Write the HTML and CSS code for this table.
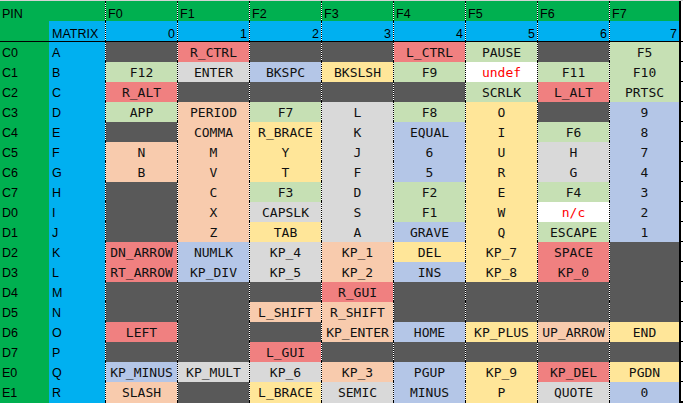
FILE: index.html
```html
<html>
<head>
<meta charset="utf-8">
<title>Keyboard matrix</title>
<link rel="stylesheet" href="styles.css">
</head>

<body>

<div class="sheet">

<div class="row head-top">
<div class="pin">PIN</div><div class="mtx"></div>
<div class="f">F0</div><div class="f">F1</div><div class="f">F2</div><div class="f">F3</div>
<div class="f">F4</div><div class="f">F5</div><div class="f">F6</div><div class="f last">F7</div>
</div>

<div class="row head-num">
<div class="pin"></div><div class="mtx">MATRIX</div>
<div class="f">0</div><div class="f">1</div><div class="f">2</div><div class="f">3</div>
<div class="f">4</div><div class="f">5</div><div class="f">6</div><div class="f last">7</div>
</div>

<div class="row data">
<div class="pin">C0</div><div class="mtx">A</div>
<div class="f dark"></div><div class="f red">R_CTRL</div><div class="f dark"></div><div class="f dark"></div>
<div class="f red">L_CTRL</div><div class="f grn">PAUSE</div><div class="f dark"></div><div class="f last grn">F5</div>
</div>

<div class="row data">
<div class="pin">C1</div><div class="mtx">B</div>
<div class="f grn">F12</div><div class="f gry">ENTER</div><div class="f blu">BKSPC</div><div class="f yel">BKSLSH</div>
<div class="f grn">F9</div><div class="f none">undef</div><div class="f grn">F11</div><div class="f last grn">F10</div>
</div>

<div class="row data">
<div class="pin">C2</div><div class="mtx">C</div>
<div class="f red">R_ALT</div><div class="f dark"></div><div class="f dark"></div><div class="f dark"></div>
<div class="f dark"></div><div class="f grn">SCRLK</div><div class="f red">L_ALT</div><div class="f last grn">PRTSC</div>
</div>

<div class="row data">
<div class="pin">C3</div><div class="mtx">D</div>
<div class="f grn">APP</div><div class="f pch">PERIOD</div><div class="f grn">F7</div><div class="f gry">L</div>
<div class="f grn">F8</div><div class="f yel">O</div><div class="f dark"></div><div class="f last blu">9</div>
</div>

<div class="row data">
<div class="pin">C4</div><div class="mtx">E</div>
<div class="f dark"></div><div class="f pch">COMMA</div><div class="f yel">R_BRACE</div><div class="f gry">K</div>
<div class="f blu">EQUAL</div><div class="f yel">I</div><div class="f grn">F6</div><div class="f last blu">8</div>
</div>

<div class="row data">
<div class="pin">C5</div><div class="mtx">F</div>
<div class="f pch">N</div><div class="f pch">M</div><div class="f yel">Y</div><div class="f gry">J</div>
<div class="f blu">6</div><div class="f yel">U</div><div class="f gry">H</div><div class="f last blu">7</div>
</div>

<div class="row data">
<div class="pin">C6</div><div class="mtx">G</div>
<div class="f pch">B</div><div class="f pch">V</div><div class="f yel">T</div><div class="f gry">F</div>
<div class="f blu">5</div><div class="f yel">R</div><div class="f gry">G</div><div class="f last blu">4</div>
</div>

<div class="row data">
<div class="pin">C7</div><div class="mtx">H</div>
<div class="f dark"></div><div class="f pch">C</div><div class="f grn">F3</div><div class="f gry">D</div>
<div class="f grn">F2</div><div class="f yel">E</div><div class="f grn">F4</div><div class="f last blu">3</div>
</div>

<div class="row data">
<div class="pin">D0</div><div class="mtx">I</div>
<div class="f dark"></div><div class="f pch">X</div><div class="f gry">CAPSLK</div><div class="f gry">S</div>
<div class="f grn">F1</div><div class="f yel">W</div><div class="f none">n/c</div><div class="f last blu">2</div>
</div>

<div class="row data">
<div class="pin">D1</div><div class="mtx">J</div>
<div class="f dark"></div><div class="f pch">Z</div><div class="f yel">TAB</div><div class="f gry">A</div>
<div class="f blu">GRAVE</div><div class="f yel">Q</div><div class="f grn">ESCAPE</div><div class="f last blu">1</div>
</div>

<div class="row data">
<div class="pin">D2</div><div class="mtx">K</div>
<div class="f red">DN_ARROW</div><div class="f blu">NUMLK</div><div class="f gry">KP_4</div><div class="f pch">KP_1</div>
<div class="f yel">DEL</div><div class="f yel">KP_7</div><div class="f red">SPACE</div><div class="f last dark"></div>
</div>

<div class="row data">
<div class="pin">D3</div><div class="mtx">L</div>
<div class="f red">RT_ARROW</div><div class="f blu">KP_DIV</div><div class="f gry">KP_5</div><div class="f pch">KP_2</div>
<div class="f blu">INS</div><div class="f yel">KP_8</div><div class="f red">KP_0</div><div class="f last dark"></div>
</div>

<div class="row data">
<div class="pin">D4</div><div class="mtx">M</div>
<div class="f dark"></div><div class="f dark"></div><div class="f dark"></div><div class="f red">R_GUI</div>
<div class="f dark"></div><div class="f dark"></div><div class="f dark"></div><div class="f last dark"></div>
</div>

<div class="row data">
<div class="pin">D5</div><div class="mtx">N</div>
<div class="f dark"></div><div class="f dark"></div><div class="f pch">L_SHIFT</div><div class="f pch">R_SHIFT</div>
<div class="f dark"></div><div class="f dark"></div><div class="f dark"></div><div class="f last dark"></div>
</div>

<div class="row data">
<div class="pin">D6</div><div class="mtx">O</div>
<div class="f red">LEFT</div><div class="f dark"></div><div class="f dark"></div><div class="f pch">KP_ENTER</div>
<div class="f blu">HOME</div><div class="f yel">KP_PLUS</div><div class="f pch">UP_ARROW</div><div class="f last yel">END</div>
</div>

<div class="row data">
<div class="pin">D7</div><div class="mtx">P</div>
<div class="f dark"></div><div class="f dark"></div><div class="f red">L_GUI</div><div class="f dark"></div>
<div class="f dark"></div><div class="f dark"></div><div class="f dark"></div><div class="f last dark"></div>
</div>

<div class="row data">
<div class="pin">E0</div><div class="mtx">Q</div>
<div class="f blu">KP_MINUS</div><div class="f gry">KP_MULT</div><div class="f gry">KP_6</div><div class="f pch">KP_3</div>
<div class="f blu">PGUP</div><div class="f yel">KP_9</div><div class="f red">KP_DEL</div><div class="f last yel">PGDN</div>
</div>

<div class="row data end">
<div class="pin">E1</div><div class="mtx">R</div>
<div class="f pch">SLASH</div><div class="f dark"></div><div class="f yel">L_BRACE</div><div class="f gry">SEMIC</div>
<div class="f blu">MINUS</div><div class="f yel">P</div><div class="f gry">QUOTE</div><div class="f last blu">0</div>
</div>

</div>

</body>
</html>
```

FILE: styles.css
```css
* {
  margin: 0;
  padding: 0;
  box-sizing: border-box;
}

body {
  background-color: #fff;
  font-family: "Liberation Sans", Arial, sans-serif;
  font-size: 12.5px;
  color: #000;
}

.sheet {
  border-top: 1px solid #d4d4d4;
}

.row {
  display: grid;
  grid-template-columns: 49px 56px repeat(8, 72px);
  height: 20px;
  background-color: #fff;
}

/* dotted column rule: black dots, white shows through the gaps */
.f {
  border-left: 1px dotted #000;
  background-clip: padding-box;
}
.last {
  border-right: 2px solid #000;
}

/* header rows */
.head-top > div, .head-num > div {
  padding-top: 6px;
  line-height: 14px;
}
.head-top > div, .head-num .pin {
  background-color: #00b050;
}
.head-num .mtx, .head-num .f {
  background-color: #00b0f0;
}
.head-top .pin { padding-left: 2px; }
.head-top .f { padding-left: 2px; }
.head-num .mtx { padding-left: 3px; }
.head-num .f {
  text-align: right;
  padding-right: 2px;
}

/* matrix rows */
.data {
  border-top: 1px solid #000;
}
.data.end {
  height: 22px;
  border-bottom: 2px solid #000;
}
.data .pin {
  background-color: #00b050;
  padding: 2px 0 0 2px;
  line-height: 19px;
}
.data .mtx {
  background-color: #00b0f0;
  padding: 2px 0 0 3px;
  line-height: 19px;
}
.data .f {
  font-family: "DejaVu Sans Mono", "Liberation Mono", monospace;
  font-size: 13px;
  text-align: center;
  padding-top: 2px;
  line-height: 18px;
  color: #111;
}

.dark { background-color: #595959; }
.red  { background-color: #f08080; }
.pch  { background-color: #f8cbad; }
.grn  { background-color: #c6e0b4; }
.gry  { background-color: #d9d9d9; }
.blu  { background-color: #b4c6e7; }
.yel  { background-color: #ffe699; }
.data .none {
  background-color: #fff;
  color: #f00;
}
```
